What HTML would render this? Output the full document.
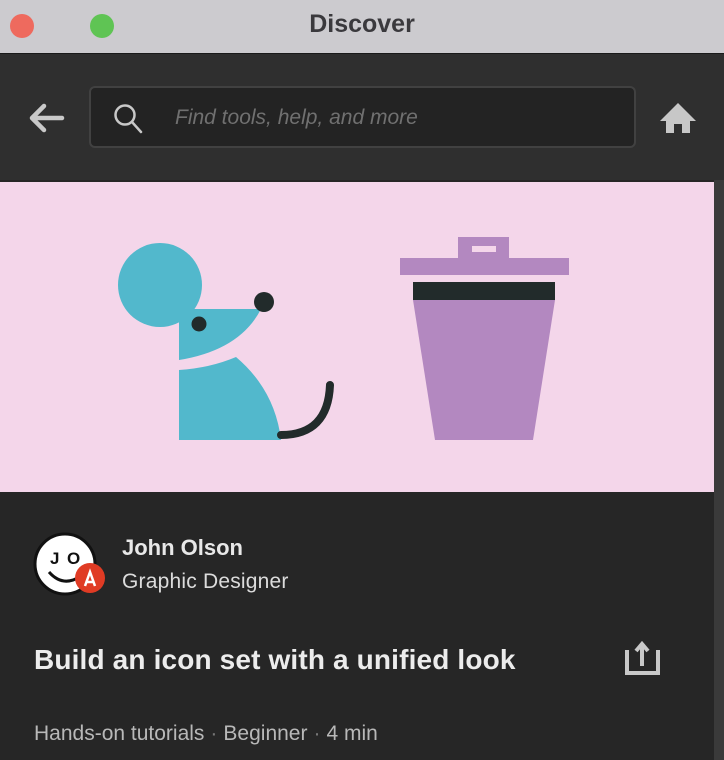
<!DOCTYPE html>
<html><head><style>
body{margin:0;width:724px;height:760px;overflow:hidden;background:#262626;font-family:"Liberation Sans",sans-serif;position:relative}
.tb{position:absolute;left:0;top:0;width:724px;height:53px;background:#cccbcf;border-bottom:1px solid #1a1a1a}
.tb h1{margin:0;position:absolute;left:0;right:0;top:10px;text-align:center;font-size:25px;font-weight:bold;color:#3a393d}
.dot{position:absolute;top:14px;width:24px;height:24px;border-radius:50%}
.hd{position:absolute;top:54px;left:0;width:724px;height:126px;background:#2f2f2f}
.sb{position:absolute;left:89px;top:86px;width:547px;height:62px;background:#232323;border:2px solid #414141;border-radius:6px;box-sizing:border-box}
.ph{position:absolute;left:84px;top:18px;font-size:21px;font-style:italic;color:#707070}
.hero{position:absolute;left:0;top:182px;width:714px;height:310px;background:#f4d6ea}
.scr{position:absolute;left:714px;top:180px;width:10px;height:580px;background:#3a3a3a}
.t{position:absolute;color:#e8e8e8}
.d{color:#777;margin:0 6px}
</style></head><body>
<div class="tb"><div class="dot" style="left:10px;background:#ee6a5e"></div><div class="dot" style="left:90px;background:#5fc454"></div><h1>Discover</h1></div>
<div class="hd"></div>
<svg style="position:absolute;left:26px;top:103px" width="40" height="30"><path d="M36 15H6M18 3L6 15l12 12" stroke="#c9c9c9" stroke-width="4.5" fill="none" stroke-linecap="round" stroke-linejoin="round"/></svg>
<div class="sb"><svg style="position:absolute;left:22px;top:15px" width="34" height="34"><circle cx="12" cy="12" r="9.5" stroke="#c8c8c8" stroke-width="2.5" fill="none"/><path d="M19 19l9 10" stroke="#c8c8c8" stroke-width="2.5" stroke-linecap="round"/></svg><div class="ph">Find tools, help, and more</div></div>
<svg style="position:absolute;left:658px;top:101px" width="40" height="34"><path d="M20 2L2 20h6v12h8v-9h8v9h8V20h6z" fill="#c7c7c7"/></svg>
<div class="hero"></div><div class="scr"></div>
<svg style="position:absolute;left:0;top:182px" width="714" height="310">
<g transform="translate(0,-182)">
<circle cx="160" cy="285" r="42" fill="#52b8cc"/>
<path d="M179 309H261Q240 350 179 360Z" fill="#52b8cc"/>
<circle cx="264" cy="302" r="10" fill="#222b2b"/>
<circle cx="199" cy="324" r="7.5" fill="#222b2b"/>
<path d="M179 370Q210 368 236 357Q275 390 281 440H179Z" fill="#52b8cc"/>
<path d="M281 435Q328 435 330 385" stroke="#222b2b" stroke-width="8" fill="none" stroke-linecap="round"/>
<path d="M458 237h51v21h-51z M472 246v6h24v-6z" fill="#b388c0" fill-rule="evenodd"/>
<rect x="400" y="258" width="169" height="17" fill="#b388c0"/>
<rect x="413" y="282" width="142" height="18" fill="#222b2b"/>
<path d="M413 300H555L533 440H435Z" fill="#b388c0"/>
</g></svg>
<svg style="position:absolute;left:33px;top:532px" width="76" height="68"><circle cx="32" cy="32" r="30" fill="#fff" stroke="#111" stroke-width="3"/><text x="17" y="32" font-size="17" font-weight="bold" font-family="Liberation Sans" fill="#111">J</text><text x="34" y="32" font-size="17" font-weight="bold" font-family="Liberation Sans" fill="#111">O</text><path d="M16 40Q30 56 48 44" stroke="#111" stroke-width="3" fill="none"/><circle cx="57" cy="46" r="15" fill="#e03b24"/><path d="M52 54l5-14 5 14M54 50h6" stroke="#fff" stroke-width="2.5" fill="none"/></svg>
<div class="t" style="left:122px;top:535px;font-size:22px;font-weight:bold">John Olson</div>
<div class="t" style="left:122px;top:570px;font-size:21px;color:#dcdcdc;letter-spacing:0.2px">Graphic Designer</div>
<div class="t" style="left:34px;top:644px;font-size:28px;font-weight:bold;color:#ececec;letter-spacing:0.15px">Build an icon set with a unified look</div>
<svg style="position:absolute;left:624px;top:640px" width="36" height="36"><path d="M3 10v23h31V10M18 26V6M12 11l6-7 6 7" stroke="#c8c8c8" stroke-width="4" fill="none"/></svg>
<div class="t" style="left:34px;top:722px;font-size:21px;color:#b8b8b8">Hands-on tutorials<span class="d">·</span>Beginner<span class="d">·</span>4 min</div>
</body></html>
